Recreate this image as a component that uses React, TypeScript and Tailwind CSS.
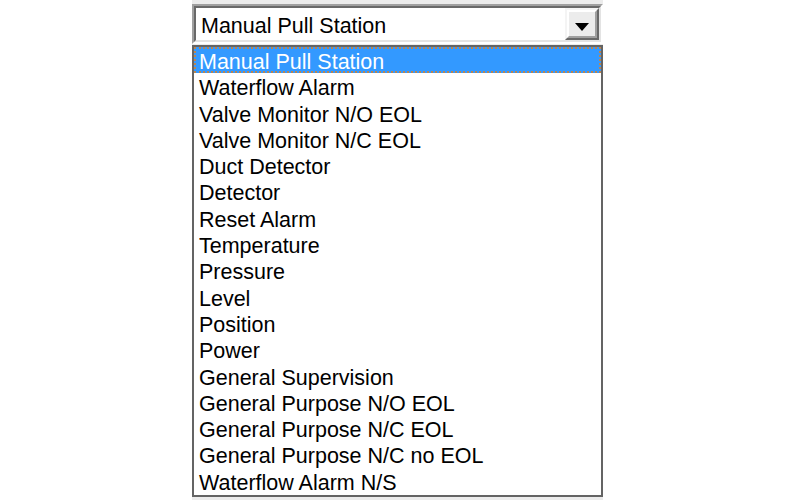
const items = [
  "Manual Pull Station",
  "Waterflow Alarm",
  "Valve Monitor N/O EOL",
  "Valve Monitor N/C EOL",
  "Duct Detector",
  "Detector",
  "Reset Alarm",
  "Temperature",
  "Pressure",
  "Level",
  "Position",
  "Power",
  "General Supervision",
  "General Purpose N/O EOL",
  "General Purpose N/C EOL",
  "General Purpose N/C no EOL",
  "Waterflow Alarm N/S",
];

const App = () => {
  return (
    <div className="w-[800px] h-[500px] bg-white pl-[192px] font-['Liberation_Sans',Arial,sans-serif] text-[21.5px] text-black">
      <div className="w-[411px] h-full flex flex-col bg-[#ececec] pt-[4px] pb-[3px]">
        {/* combobox */}
        <div className="h-[40px] border-2 border-t-[#a0a0a0] border-l-[#a0a0a0] border-b-white border-r-white">
          <div className="h-full flex items-center bg-white border-2 border-t-[#696969] border-l-[#696969] border-b-[#e3e3e3] border-r-[#e3e3e3]">
            <span className="flex-1 pl-[5px] pt-[5px] leading-none">Manual Pull Station</span>
            <div className="w-[34px] h-full border-2 border-t-[#f4f4f4] border-l-[#f4f4f4] border-b-[#696969] border-r-[#696969]">
              <div className="h-full flex items-center justify-center bg-[#ececec] border-2 border-t-white border-l-white border-b-[#a0a0a0] border-r-[#a0a0a0]">
                <svg width="14" height="8" viewBox="0 0 14 8" className="translate-y-[3px]">
                  <path d="M0 0 H14 L7 8 Z" fill="#000" />
                </svg>
              </div>
            </div>
          </div>
        </div>
        {/* list */}
        <div className="mt-[1px] flex-1 bg-white border-2 border-[#646464] flex flex-col overflow-hidden">
          {items.map((item, i) =>
            i === 0 ? (
              <div
                key={item}
                className="h-[26.3px] pt-[4px] leading-[18.3px] pl-[3px] bg-[#3399ff] text-white border-2 border-dotted border-[#b98552] whitespace-nowrap"
              >
                {item}
              </div>
            ) : (
              <div key={item} className="h-[26.3px] pt-[4px] leading-[22.3px] pl-[5px] whitespace-nowrap">
                {item}
              </div>
            )
          )}
        </div>
      </div>
    </div>
  );
};

export default App;
